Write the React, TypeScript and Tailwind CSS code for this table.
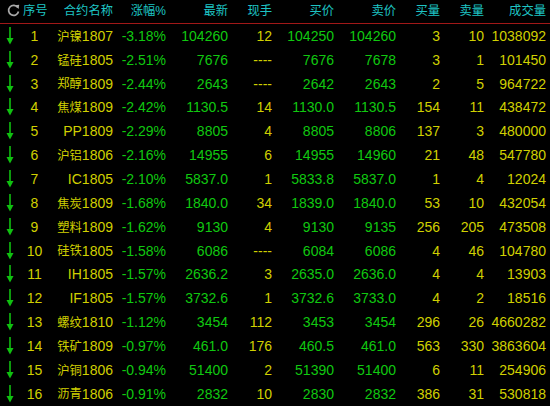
import React from "react";

type Row = [string, string, string, string, string, string, string, string, string, string];

const rows: Row[] = [
  ["1", "沪镍|1807", "-3.18%", "104260", "12", "104250", "104260", "3", "10", "1038092"],
  ["2", "锰硅|1805", "-2.51%", "7676", "----", "7676", "7678", "3", "1", "101450"],
  ["3", "郑醇|1809", "-2.44%", "2643", "----", "2642", "2643", "2", "5", "964722"],
  ["4", "焦煤|1809", "-2.42%", "1130.5", "14", "1130.0", "1130.5", "154", "11", "438472"],
  ["5", "|PP1809", "-2.29%", "8805", "4", "8805", "8806", "137", "3", "480000"],
  ["6", "沪铝|1806", "-2.16%", "14955", "6", "14955", "14960", "21", "48", "547780"],
  ["7", "|IC1805", "-2.10%", "5837.0", "1", "5833.8", "5837.0", "1", "4", "12024"],
  ["8", "焦炭|1809", "-1.68%", "1840.0", "34", "1839.0", "1840.0", "53", "10", "432054"],
  ["9", "塑料|1809", "-1.62%", "9130", "4", "9130", "9135", "256", "205", "473508"],
  ["10", "硅铁|1805", "-1.58%", "6086", "----", "6084", "6086", "4", "46", "104780"],
  ["11", "|IH1805", "-1.57%", "2636.2", "3", "2635.0", "2636.0", "4", "4", "13903"],
  ["12", "|IF1805", "-1.57%", "3732.6", "1", "3732.6", "3733.0", "4", "2", "18516"],
  ["13", "螺纹|1810", "-1.12%", "3454", "112", "3453", "3454", "296", "26", "4660282"],
  ["14", "铁矿|1809", "-0.97%", "461.0", "176", "460.5", "461.0", "563", "330", "3863604"],
  ["15", "沪铜|1806", "-0.94%", "51400", "2", "51390", "51400", "6", "11", "254906"],
  ["16", "沥青|1806", "-0.91%", "2832", "10", "2830", "2832", "386", "31", "530818"],
];

const grid =
  "grid grid-cols-[23px_23px_67px_53px_62px_44px_62px_62px_44px_44px_62px]";

function Arrow() {
  return (
    <svg width="8" height="18" viewBox="0 0 8 18">
      <path d="M4 0 V13" stroke="#10c010" strokeWidth="1.6" />
      <path d="M0.5 11 L4 17.5 L7.5 11 Z" fill="#10c010" />
    </svg>
  );
}

function Refresh() {
  return (
    <svg width="13" height="13" viewBox="0 0 13 13">
      <path
        d="M10.8 3.6 A5 5 0 1 0 11.5 7.5"
        fill="none"
        stroke="#a8a8a8"
        strokeWidth="1.7"
      />
      <path d="M8 1.2 L12.2 0.8 L11.6 5 Z" fill="#a8a8a8" />
    </svg>
  );
}

const cjk = "text-[12.3px] [font-family:'Noto_Sans_CJK_SC',sans-serif]";

function Hdr({ t, cls = "justify-end" }: { t: string; cls?: string }) {
  return <div className={`flex items-center ${cls} ${cjk} leading-none`}>{t}</div>;
}

export default function App() {
  return (
    <div className="w-[550px] h-[406px] overflow-hidden bg-black text-[14px] [font-family:'Liberation_Sans',Arial,sans-serif]">
      <div className={`${grid} h-[23px] text-[#1ec4c4] pb-[2px]`}>
        <div className="flex items-center justify-end pr-[3px]">
          <Refresh />
        </div>
        <div className={`flex items-center justify-start ${cjk} leading-none whitespace-nowrap`}>序号</div>
        <Hdr t="合约名称" />
        <div className="flex items-center justify-end leading-none">
          <span className={cjk}>涨幅</span>
          <span className="text-[12px]">%</span>
        </div>
        <Hdr t="最新" />
        <Hdr t="现手" />
        <Hdr t="买价" />
        <Hdr t="卖价" />
        <Hdr t="买量" />
        <Hdr t="卖量" />
        <Hdr t="成交量" />
      </div>
      <div className="h-[1px] bg-[#a01818]" />
      {rows.map((r) => {
        const [cn, code] = r[1].split("|");
        return (
          <div key={r[0]} className={`${grid} h-[23.85px] leading-none`}>
            <div className="flex items-center justify-end pr-[9px]">
              <Arrow />
            </div>
            <div className="flex items-center justify-center text-[#d0d000]">{r[0]}</div>
            <div className="flex items-center justify-end text-[#d0d000] whitespace-nowrap">
              {cn && <span className={cjk}>{cn}</span>}
              <span>{code}</span>
            </div>
            <div className="flex items-center justify-end text-[#10c810]">{r[2]}</div>
            <div className="flex items-center justify-end text-[#10c810]">{r[3]}</div>
            <div className="flex items-center justify-end text-[#d0d000]">{r[4]}</div>
            <div className="flex items-center justify-end text-[#10c810]">{r[5]}</div>
            <div className="flex items-center justify-end text-[#10c810]">{r[6]}</div>
            <div className="flex items-center justify-end text-[#d0d000]">{r[7]}</div>
            <div className="flex items-center justify-end text-[#d0d000]">{r[8]}</div>
            <div className="flex items-center justify-end text-[#d0d000]">{r[9]}</div>
          </div>
        );
      })}
    </div>
  );
}
